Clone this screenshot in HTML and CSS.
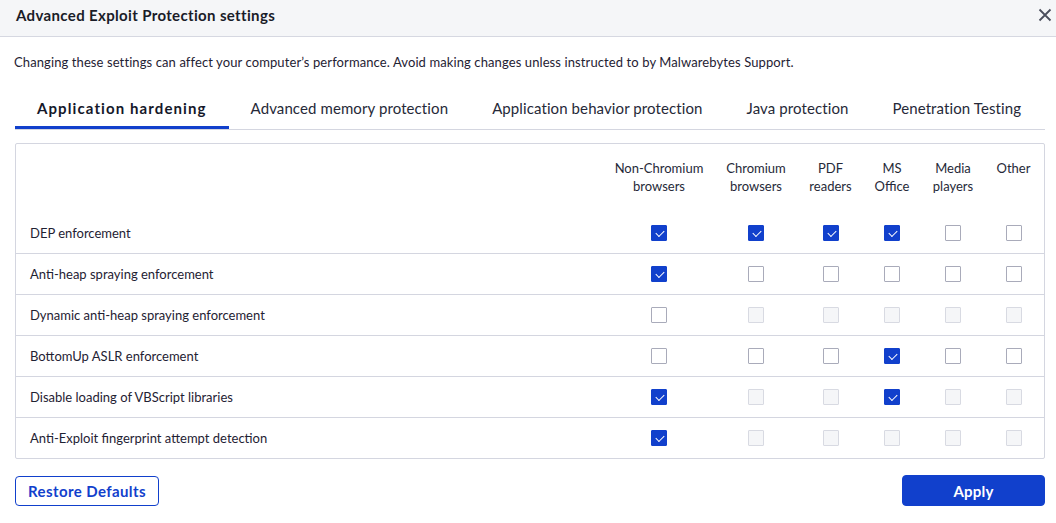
FILE: index.html
```html
<!DOCTYPE html>
<html>
<head>
<meta charset="utf-8">
<link rel="stylesheet" href="styles.css">
</head>
<body>
<div class="dialog">
  <header class="titlebar">
    <h1 class="title">Advanced Exploit Protection settings</h1>
    <button class="close" aria-label="Close">
      <svg width="14" height="14" viewBox="0 0 14 14"><path d="M1.5 1.5 L12.5 12.5 M12.5 1.5 L1.5 12.5" stroke="#4a4d5c" stroke-width="1.8" fill="none"/></svg>
    </button>
  </header>
  <main class="content">
    <p class="desc">Changing these settings can affect your computer’s performance. Avoid making changes unless instructed to by Malwarebytes Support.</p>
    <nav class="tabs">
      <div class="tab active">Application hardening</div>
      <div class="tab">Advanced memory protection</div>
      <div class="tab">Application behavior protection</div>
      <div class="tab">Java protection</div>
      <div class="tab">Penetration Testing</div>
    </nav>
    <div class="table">
      <div class="row head">
        <div class="label"></div>
        <div class="col">Non-Chromium<br>browsers</div>
        <div class="col">Chromium<br>browsers</div>
        <div class="col">PDF<br>readers</div>
        <div class="col">MS<br>Office</div>
        <div class="col">Media<br>players</div>
        <div class="col">Other<br>&nbsp;</div>
      </div>
      <div class="row">
        <div class="label">DEP enforcement</div>
        <div class="cell"><span class="cb on"></span></div>
        <div class="cell"><span class="cb on"></span></div>
        <div class="cell"><span class="cb on"></span></div>
        <div class="cell"><span class="cb on"></span></div>
        <div class="cell"><span class="cb"></span></div>
        <div class="cell"><span class="cb"></span></div>
      </div>
      <div class="row">
        <div class="label">Anti-heap spraying enforcement</div>
        <div class="cell"><span class="cb on"></span></div>
        <div class="cell"><span class="cb"></span></div>
        <div class="cell"><span class="cb"></span></div>
        <div class="cell"><span class="cb"></span></div>
        <div class="cell"><span class="cb"></span></div>
        <div class="cell"><span class="cb"></span></div>
      </div>
      <div class="row">
        <div class="label">Dynamic anti-heap spraying enforcement</div>
        <div class="cell"><span class="cb"></span></div>
        <div class="cell"><span class="cb dis"></span></div>
        <div class="cell"><span class="cb dis"></span></div>
        <div class="cell"><span class="cb dis"></span></div>
        <div class="cell"><span class="cb dis"></span></div>
        <div class="cell"><span class="cb dis"></span></div>
      </div>
      <div class="row">
        <div class="label">BottomUp ASLR enforcement</div>
        <div class="cell"><span class="cb"></span></div>
        <div class="cell"><span class="cb"></span></div>
        <div class="cell"><span class="cb"></span></div>
        <div class="cell"><span class="cb on"></span></div>
        <div class="cell"><span class="cb"></span></div>
        <div class="cell"><span class="cb"></span></div>
      </div>
      <div class="row">
        <div class="label">Disable loading of VBScript libraries</div>
        <div class="cell"><span class="cb on"></span></div>
        <div class="cell"><span class="cb dis"></span></div>
        <div class="cell"><span class="cb dis"></span></div>
        <div class="cell"><span class="cb on"></span></div>
        <div class="cell"><span class="cb dis"></span></div>
        <div class="cell"><span class="cb dis"></span></div>
      </div>
      <div class="row">
        <div class="label">Anti-Exploit fingerprint attempt detection</div>
        <div class="cell"><span class="cb on"></span></div>
        <div class="cell"><span class="cb dis"></span></div>
        <div class="cell"><span class="cb dis"></span></div>
        <div class="cell"><span class="cb dis"></span></div>
        <div class="cell"><span class="cb dis"></span></div>
        <div class="cell"><span class="cb dis"></span></div>
      </div>
    </div>
    <div class="actions">
      <button class="btn secondary">Restore Defaults</button>
      <button class="btn primary">Apply</button>
    </div>
  </main>
</div>
</body>
</html>
```

FILE: styles.css
```css
* { box-sizing: border-box; }
html, body { margin: 0; padding: 0; background: #ffffff; }
body {
  font-family: "Lato", "Noto Sans", sans-serif;
  color: #1f2233;
  width: 1056px;
  height: 523px;
  overflow: hidden;
}
.titlebar {
  height: 37px;
  background: #f5f6f8;
  border-bottom: 1px solid #d6d8e1;
  display: flex;
  align-items: center;
  justify-content: space-between;
  padding: 0 4px 0 16px;
}
.title {
  margin: 0;
  font-size: 15px;
  font-weight: 700;
  color: #1a1c28;
  line-height: 20px;
  margin-top: -6px;
  letter-spacing: 0.35px;
}
.close {
  border: 0;
  background: transparent;
  padding: 0;
  width: 14px;
  height: 14px;
  margin-top: -6px;
  display: flex;
}
.content {
  padding: 0 11px 0 15px;
}
.desc {
  margin: 16px 0 0 -1px;
  font-size: 13px;
  line-height: 18px;
  color: #1f2233;
  letter-spacing: 0.1px;
}
.tabs {
  margin-top: 13px;
  display: flex;
  border-bottom: 1px solid #d4d6e0;
}
.tab {
  font-size: 15px;
  line-height: 20px;
  padding: 14px 22px 8px;
  border-bottom: 3px solid transparent;
  color: #262938;
  letter-spacing: 0.1px;
}
.tab.active {
  font-weight: 700;
  border-bottom-color: #1140cc;
  color: #15182a;
  letter-spacing: 1.1px;
}
.table {
  margin-top: 13px;
  border: 1px solid #d4d6e0;
  border-radius: 2px;
  padding-right: 3px;
}
.row {
  display: grid;
  grid-template-columns: 1fr 112px 82px 67px 56px 66px 55px;
  height: 41px;
  border-bottom: 1px solid #d4d6e0;
  align-items: center;
  margin-right: -3px;
  padding-right: 3px;
}
.row:last-child { border-bottom: 0; height: 40px; }
.row.head {
  height: 69px;
  border-bottom: 0;
  align-items: start;
  padding-top: 15px;
}
.label {
  padding-left: 14px;
  font-size: 13px;
  line-height: 18px;
  color: #1f2233;
}
.col {
  text-align: center;
  font-size: 13px;
  line-height: 18px;
  color: #262938;
}
.cell {
  display: flex;
  justify-content: center;
}
.cb {
  width: 16px;
  height: 16px;
  border: 1px solid #a9abba;
  border-radius: 1px;
  background: #ffffff;
  display: block;
  position: relative;
}
.cb.dis {
  background: #f5f6f8;
  border-color: #d8dae2;
}
.cb.on {
  background: #1140cc;
  border-color: #1140cc;
}
.cb.on::after {
  content: "";
  position: absolute;
  left: 4px;
  top: 2px;
  width: 7px;
  height: 4px;
  border-left: 1.5px solid #ffffff;
  border-bottom: 1.5px solid #ffffff;
  transform: translate(0, 2px) rotate(-45deg);
}
.actions {
  margin-top: 16px;
  display: flex;
  justify-content: space-between;
  align-items: flex-start;
}
.btn {
  font-family: "Lato", "Noto Sans", sans-serif;
  font-size: 15px;
  font-weight: 700;
  height: 31px;
  border-radius: 4px;
  cursor: pointer;
}
.btn.secondary {
  width: 144px;
  background: #ffffff;
  border: 1px solid #1140cc;
  color: #1140cc;
  margin-top: 1px;
  height: 30px;
  letter-spacing: 0.4px;
}
.btn.primary {
  width: 143px;
  background: #1140cc;
  border: 1px solid #1140cc;
  color: #ffffff;
  margin-top: 0;
  letter-spacing: 0.2px;
}
```
